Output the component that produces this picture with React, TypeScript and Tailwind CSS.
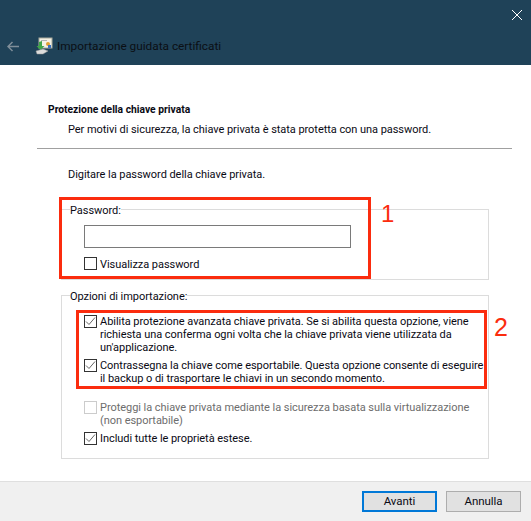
const FONT = "font-['Roboto',sans-serif]"

function Check({ on = false, disabled = false }: { on?: boolean; disabled?: boolean }) {
  return (
    <span className={`flex h-[13px] w-[13px] shrink-0 items-center justify-center border bg-white ${disabled ? 'border-[#cccccc]' : 'border-[#333333]'}`}>
      {on && (
        <svg width="11" height="11" viewBox="0 0 11 11" fill="none" stroke="#666666" strokeWidth="1">
          <path d="M1 5.5 L4 8.5 L10 1.5" />
        </svg>
      )}
    </span>
  )
}

function Option({ on, disabled, lines, className }: { on?: boolean; disabled?: boolean; lines: string[]; className?: string }) {
  return (
    <div className={`flex gap-[3px] ${className ?? ''}`}>
      <div className="pt-[1px]"><Check on={on} disabled={disabled} /></div>
      <div className={`whitespace-nowrap ${disabled ? 'text-[#6d6d6d]' : ''}`}>
        {lines.map(l => <div key={l} className="h-[13px] leading-[15px]">{l}</div>)}
      </div>
    </div>
  )
}

function CertIcon() {
  return (
    <svg width="18" height="18" viewBox="0 0 18 18">
      <rect x="4" y="1" width="13" height="10" fill="#f4f1e4" stroke="#a9a99b" strokeWidth="1" />
      <rect x="6" y="3" width="6" height="1" fill="#b5b5b5" />
      <circle cx="13" cy="7" r="2" fill="#e0a030" />
      <rect x="13" y="8" width="3" height="3" fill="#3a6fc0" />
      <path d="M7 4 L7 9 L9.5 9 L5.5 13 L1.5 9 L4 9 L4 5 Z" fill="#3fa648" />
      <path d="M1 14 L8 12 L13 14 L8 17 L2 17 Z" fill="#dcdcdc" stroke="#9a9a9a" strokeWidth="0.5" />
    </svg>
  )
}

export default function App() {
  return (
    <div className={`relative flex h-[521px] w-[531px] flex-col overflow-hidden bg-white text-[11px] tracking-[-0.05px] text-[#0a0a14] ${FONT}`}>
      <header className="relative flex h-[65px] shrink-0 items-start bg-[#1f4258]">
        <div className="mt-[37px] flex h-[18px] items-center">
          <svg className="ml-[7px]" width="12" height="11" viewBox="0 0 12 11" fill="none" stroke="#7f8e99" strokeWidth="1.5">
            <path d="M12 5.5 H1 M5.5 1 L1 5.5 L5.5 10" />
          </svg>
          <div className="ml-[16px]"><CertIcon /></div>
          <span className="ml-[4px] text-[11.8px] leading-[18px] tracking-normal text-[#0b0f14]">Importazione guidata certificati</span>
        </div>
        <svg className="absolute left-[512px] top-[10px]" width="10" height="10" viewBox="0 0 10 10" stroke="#ffffff" strokeWidth="1">
          <path d="M0 0 L10 10 M10 0 L0 10" />
        </svg>
      </header>

      <main className="flex-1">
        <h1 className="ml-[48px] mt-[38px] text-[10.3px] font-bold leading-[14px] tracking-normal">Protezione della chiave privata</h1>
        <p className="ml-[68px] mt-[5px] leading-[15px]">Per motivi di sicurezza, la chiave privata è stata protetta con una password.</p>
        <div className="ml-[37px] mt-[11px] h-[1px] w-[475px] bg-[#a0a0a0]" />
        <p className="ml-[68px] mt-[18px] leading-[15px]">Digitare la password della chiave privata.</p>

        <fieldset className="ml-[61px] mt-[20px] h-[78px] w-[428px] border border-[#dcdcdc]">
          <legend className="ml-[8px] h-[15px] leading-[17px]">Password:</legend>
          <div className="ml-[22px] mt-[8px] h-[23px] w-[267px] border border-[#7a7a7a]" />
          <div className="ml-[22px] mt-[9px] flex h-[13px] gap-[3px]">
            <Check />
            <span className="leading-[15px]">Visualizza password</span>
          </div>
        </fieldset>

        <fieldset className="ml-[61px] mt-[8px] h-[171px] w-[428px] border border-[#dcdcdc]">
          <legend className="ml-[8px] h-[15px] leading-[17px]">Opzioni di importazione:</legend>
          <div className="ml-[22px] mt-[11px]">
            <Option on lines={['Abilita protezione avanzata chiave privata. Se si abilita questa opzione, viene', 'richiesta una conferma ogni volta che la chiave privata viene utilizzata da', "un'applicazione."]} />
            <Option on className="mt-[5px]" lines={['Contrassegna la chiave come esportabile. Questa opzione consente di eseguire', 'il backup o di trasportare le chiavi in un secondo momento.']} />
            <Option disabled className="mt-[16px]" lines={['Proteggi la chiave privata mediante la sicurezza basata sulla virtualizzazione', '(non esportabile)']} />
            <Option on className="mt-[5px]" lines={['Includi tutte le proprietà estese.']} />
          </div>
        </fieldset>
      </main>

      <footer className="flex h-[40px] shrink-0 items-start justify-end gap-[9px] border-t border-[#dfdfdf] bg-[#f0f0f0] pr-[10px] pt-[9px]">
        <button className="h-[21px] w-[75px] border-2 border-[#0078d7] bg-[#e1e1e1] text-[11.5px] leading-[17px]">Avanti</button>
        <button className="h-[21px] w-[75px] border border-[#adadad] bg-[#e1e1e1] text-[11.5px] leading-[19px]">Annulla</button>
      </footer>

      {/* red annotations drawn over the dialog */}
      <div className="absolute left-[59px] top-[197px] h-[82px] w-[312px] border-[3px] border-[#fb2c0e]" />
      <div className="absolute left-[76px] top-[310px] h-[79px] w-[411px] border-[3px] border-[#fb2c0e]" />
      <span className="absolute left-[381px] top-[200px] font-['Liberation_Sans',sans-serif] text-[24px] leading-[28px] text-[#fb2c0e]">1</span>
      <span className="absolute left-[494px] top-[313px] font-['Liberation_Sans',sans-serif] text-[25px] leading-[28px] text-[#fb2c0e]">2</span>
    </div>
  )
}
